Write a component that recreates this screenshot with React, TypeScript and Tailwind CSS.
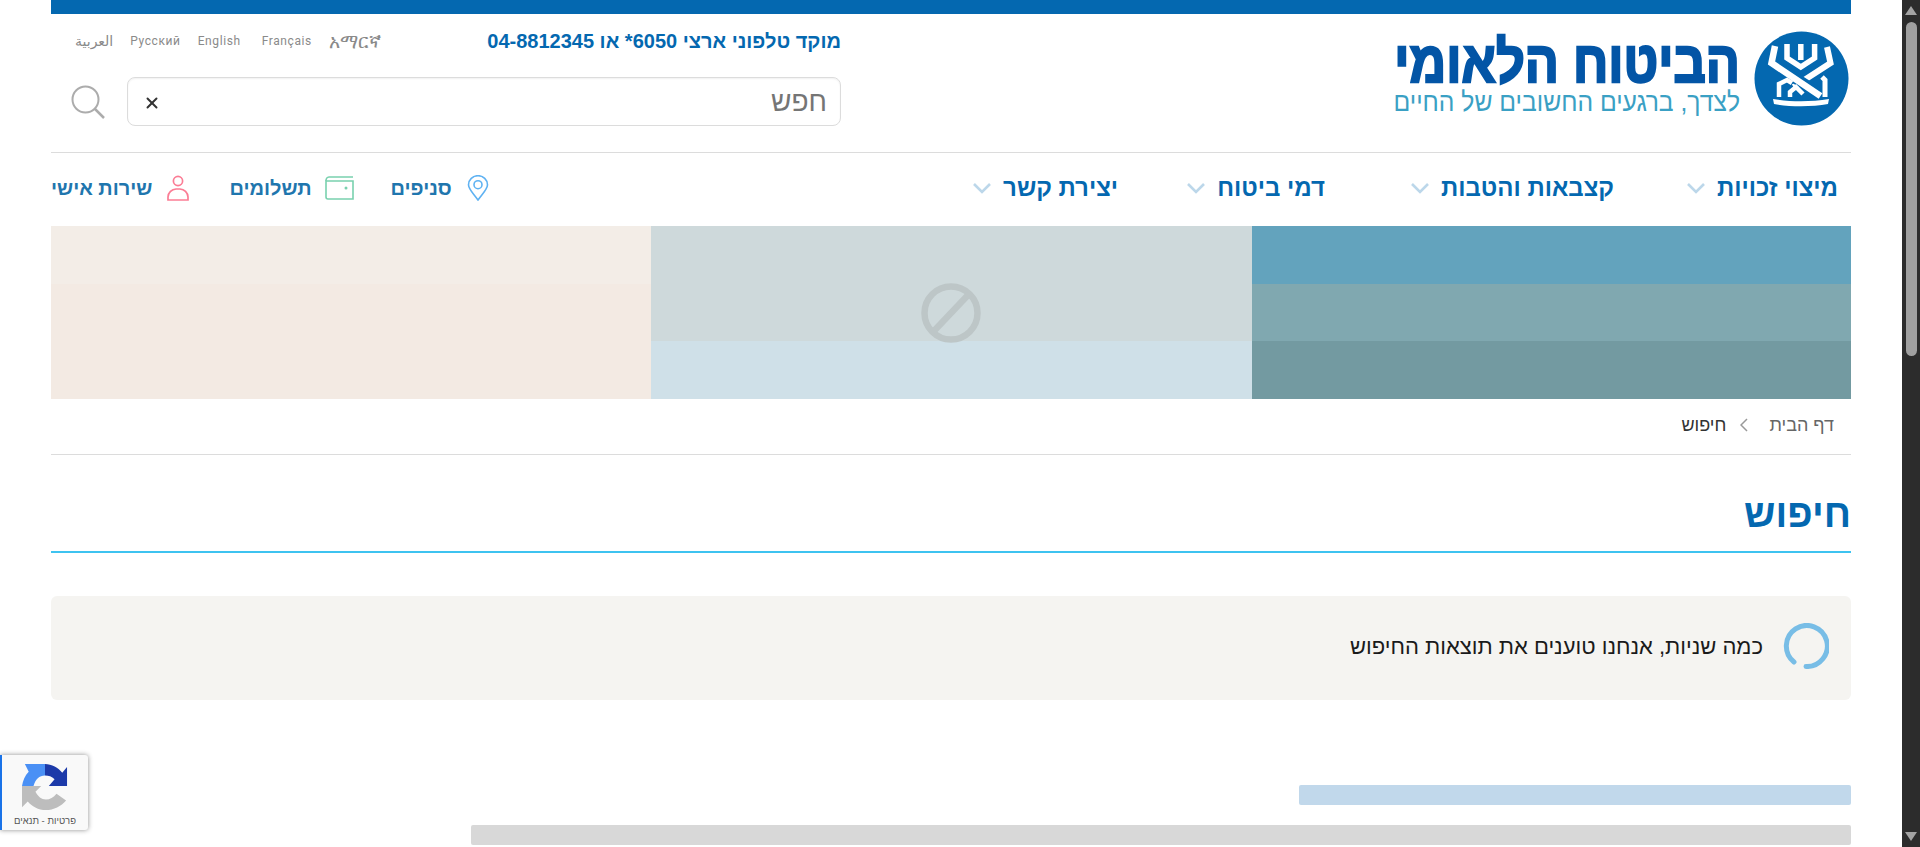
import { X } from 'lucide-react';

const font = "font-['Liberation_Sans','Noto_Sans_CJK_SC',sans-serif]";

const navItems = [
  { label: 'מיצוי זכויות', width: 'w-[224px]' },
  { label: 'קצבאות והטבות', width: 'w-[289px]' },
  { label: 'דמי ביטוח', width: 'w-[207px]' },
  { label: 'יצירת קשר', width: '' },
];

function Chevron() {
  return (
    <svg width="20" height="12" viewBox="0 0 20 12" fill="none" stroke="#bcd7ea" strokeWidth="2.6">
      <path d="M2 2l8 8 8-8" />
    </svg>
  );
}

function Logo() {
  return (
    <svg width="95" height="95" viewBox="0 0 95 95">
      <circle cx="47.5" cy="47.5" r="47" fill="#0468b0" />
      <g fill="none" stroke="#fff" strokeLinejoin="miter">
        <path d="M33 13v14l13.800 9 13.800-9V13" strokeWidth="5.500" />
        <path d="M46.800 13v16" strokeWidth="5.500" />
        <path d="M73 16l3.500 16-37 24" strokeWidth="6" />
        <path d="M21 15l-3.500 17 47 30" stroke="#0468b0" strokeWidth="11" />
        <path d="M21 15l-3.500 17 49 33" strokeWidth="6.500" />
        <path d="M25 66V53l8-4 5 3" strokeWidth="4.500" />
        <path d="M36 66v-5l6-5 7 7" strokeWidth="4.500" />
        <path d="M71 66V49l-3-3" strokeWidth="5" />
      </g>
      <path d="M19 68c18 3 38 3 56 0l-1 5c-16 3-38 3-54 0z" fill="#fff" />
    </svg>
  );
}

function Recaptcha() {
  return (
    <div className="absolute left-0 top-[755px] w-[88px] h-[75px] bg-[#f9f9f9] border-l-[2px] border-[#1a73e8] rounded-r-[3px] shadow-[0_0_5px_rgba(0,0,0,0.45)] flex flex-col items-center">
      <svg className="mt-[8px]" width="46" height="48" viewBox="0 0 48 48">
        <path d="M0 23C1 17 3 12 7 8L3 0H24V12C18 12 14 16 12 23Z" fill="#4a90f5" />
        <path d="M24 0C31 0 38 4 42 9L47 3V23H28L34 16C31 13 28 12 24 12Z" fill="#1c3aa9" />
        <path d="M0 23H20L14 29C17 34 20 37 25 37C29 37 33 35 36 31L46 38C41 44 33 48 25 48C17 48 10 44 6 39L0 45Z" fill="#bdbdbd" />
      </svg>
      <div dir="rtl" className="text-[9.5px] leading-[10px] text-[#555] mt-[5px] whitespace-nowrap">
        פרטיות - תנאים
      </div>
    </div>
  );
}

export default function App() {
  return (
    <div dir="ltr" className={`${font} relative flex h-[847px] w-[1920px] overflow-hidden bg-white`}>
      <div className="flex-1 min-w-0 px-[51px]">
        <div className="w-[1800px]">
          <div className="h-[14px] bg-[#0468b0]" />

          <header dir="rtl" className="h-[139px] border-b border-[#dcdcdc] flex justify-between">
            <div className="flex pt-[17px] gap-[14px] pr-[2px]">
              <Logo />
              <div className="flex flex-col w-[348px] pt-[8px]">
                <div className="text-[50.5px] leading-[46px] font-bold text-[#0355a6] whitespace-nowrap scale-y-[1.15] [-webkit-text-stroke:2px_#0355a6]">
                  הביטוח הלאומי
                </div>
                <div className="text-[24.7px] leading-[24px] mt-[5px] text-[#3aa0c4] whitespace-nowrap scale-y-[1.1]">
                  לצדך, ברגעים החשובים של החיים
                </div>
              </div>
            </div>

            <div dir="ltr" className="flex flex-col w-[790px] pt-[14px]">
              <div className="flex items-center justify-between h-[26px]">
                <div className="flex items-center pl-[24px] gap-[17px] text-[12px] tracking-[0.6px] text-[#8a8a8a] font-['Roboto',sans-serif]">
                  <span className="font-['DejaVu_Sans',sans-serif] text-[14px] tracking-normal">العربية</span>
                  <span>Русский</span>
                  <span>English</span>
                  <span className="ml-[4px]">Français</span>
                  <span className="font-['DejaVu_Sans','Noto_Sans',sans-serif] text-[19px] tracking-normal">አማርኛ</span>
                </div>
                <div dir="rtl" className="text-[20px] font-bold text-[#0468b0] whitespace-nowrap">
                  מוקד טלפוני ארצי 6050* או 04-8812345
                </div>
              </div>
              <div className="flex items-center mt-[23px] gap-[22px] pl-[20px]">
                <svg width="34" height="34" viewBox="0 0 34 34" fill="none" stroke="#acacac" strokeWidth="2">
                  <circle cx="14.500" cy="14.500" r="13" />
                  <path d="M24 24l9 9" strokeWidth="2.500" />
                </svg>
                <div dir="rtl" className="flex-1 h-[49px] border border-[#dcdcdc] rounded-[8px] flex items-center justify-between pr-[2px] pl-[15px] shadow-[inset_0_1px_2px_rgba(0,0,0,0.06)]">
                  <span className="text-[28px] text-[#757575] pr-[11px]">חפש</span>
                  <X size={18} strokeWidth={2.600} className="text-[#333] mt-[3px]" />
                </div>
              </div>
            </div>
          </header>

          <nav dir="rtl" className="h-[73px] flex items-center justify-between pb-[4px]">
            <ul className="flex items-center pr-[13px]">
              {navItems.map((item) => (
                <li key={item.label} className={`flex items-center gap-[11px] ${item.width}`}>
                  <span className="text-[24px] font-bold text-[#0468b0] whitespace-nowrap">{item.label}</span>
                  <Chevron />
                </li>
              ))}
            </ul>
            <ul className="flex items-center text-[20px] font-bold text-[#1f76ae]">
              <li className="flex items-center gap-[15px] ml-[37px]">
                <svg width="22" height="26" viewBox="0 0 22 26" fill="none" stroke="#5fb2f2" strokeWidth="1.600">
                  <path d="M11 25C6 18 1.500 14 1.500 9.700a9.500 9 0 0 1 19 0C20.500 14 16 18 11 25z" />
                  <circle cx="11" cy="9.700" r="4" />
                </svg>
                <span>סניפים</span>
              </li>
              <li className="flex items-center gap-[13px] ml-[40px]">
                <svg width="29" height="24" viewBox="0 0 29 24" fill="none" stroke="#79d1ae" strokeWidth="1.600">
                  <path d="M4 1h24M1 5h27v18H3a2 2 0 0 1-2-2z" />
                  <path d="M1 5c0-2 1-4 3-4" />
                  <circle cx="21" cy="12" r="0.700" fill="#79d1ae" />
                </svg>
                <span>תשלומים</span>
              </li>
              <li className="flex items-center gap-[15px]">
                <svg width="22" height="26" viewBox="0 0 22 26" fill="none" stroke="#fb7d95" strokeWidth="1.700">
                  <circle cx="11" cy="6" r="4.600" />
                  <path d="M1 25v-3a8.500 8.500 0 0 1 8-8h4a8.500 8.500 0 0 1 8 8v3z" />
                </svg>
                <span>שירות אישי</span>
              </li>
            </ul>
          </nav>

          <div className="flex h-[173px]">
            <div className="w-[600px] flex flex-col">
              <div className="h-[58px] bg-[#f3ede7]" />
              <div className="flex-1 bg-[#f3eae3]" />
            </div>
            <div className="relative w-[601px] flex flex-col">
              <div className="h-[115px] bg-[#ced9db]" />
              <div className="flex-1 bg-[#cfe0e8]" />
              <svg className="absolute left-[270px] top-[57px]" width="60" height="60" viewBox="0 0 60 60" fill="none" stroke="#bdc6c7" strokeWidth="6.500">
                <circle cx="30" cy="30" r="26.500" />
                <path d="M12 49L48 11" />
              </svg>
            </div>
            <div className="w-[599px] flex flex-col">
              <div className="h-[58px] bg-[#63a3bd]" />
              <div className="h-[57px] bg-[#80a8b0]" />
              <div className="flex-1 bg-[#739aa1]" />
            </div>
          </div>

          <div dir="rtl" className="h-[56px] border-b border-[#dcdcdc] flex items-center pr-[17px] text-[18px] pb-[3px]">
            <span className="text-[#666]">דף הבית</span>
            <svg className="mr-[21px] ml-[14px]" width="8" height="14" viewBox="0 0 8 14" fill="none" stroke="#999" strokeWidth="1.500">
              <path d="M7 1L1 7l6 6" />
            </svg>
            <span className="text-[#333]">חיפוש</span>
          </div>

          <div dir="rtl" className="h-[98px] border-b-[2px] border-[#3ec3f0] pt-[34px]">
            <h1 className="text-[39px] leading-[50px] font-bold text-[#0468b0]">חיפוש</h1>
          </div>

          <div dir="rtl" className="mt-[43px] h-[104px] bg-[#f5f4f1] rounded-[6px] flex items-center pr-[22px] gap-[20px] pb-[4px]">
            <svg width="46" height="46" viewBox="0 0 46 46" fill="none" stroke="#78bde6" strokeWidth="5" strokeLinecap="round">
              <path d="M11 39A20.500 20.500 0 1 1 23 43.500" />
            </svg>
            <span className="text-[22px] text-[#1a1a1a]">כמה שניות, אנחנו טוענים את תוצאות החיפוש</span>
          </div>

          <div dir="rtl" className="mt-[85px] flex flex-col gap-[20px]">
            <div className="h-[20px] w-[552px] bg-[#c1d8eb] rounded-[2px]" />
            <div className="h-[20px] w-[1380px] bg-[#d8d8d8] rounded-[2px]" />
          </div>
        </div>
      </div>

      <div className="w-[18px] shrink-0 bg-[#2c2c2c] flex flex-col items-center">
        <div className="mt-[6px] w-0 h-0 border-l-[6px] border-r-[6px] border-b-[9px] border-l-transparent border-r-transparent border-b-[#a3a3a3]" />
        <div className="mt-[7px] w-[11px] h-[334px] rounded-full bg-[#a0a0a0]" />
        <div className="mt-auto mb-[6px] w-0 h-0 border-l-[6px] border-r-[6px] border-t-[9px] border-l-transparent border-r-transparent border-t-[#a3a3a3]" />
      </div>

      <Recaptcha />
    </div>
  );
}
